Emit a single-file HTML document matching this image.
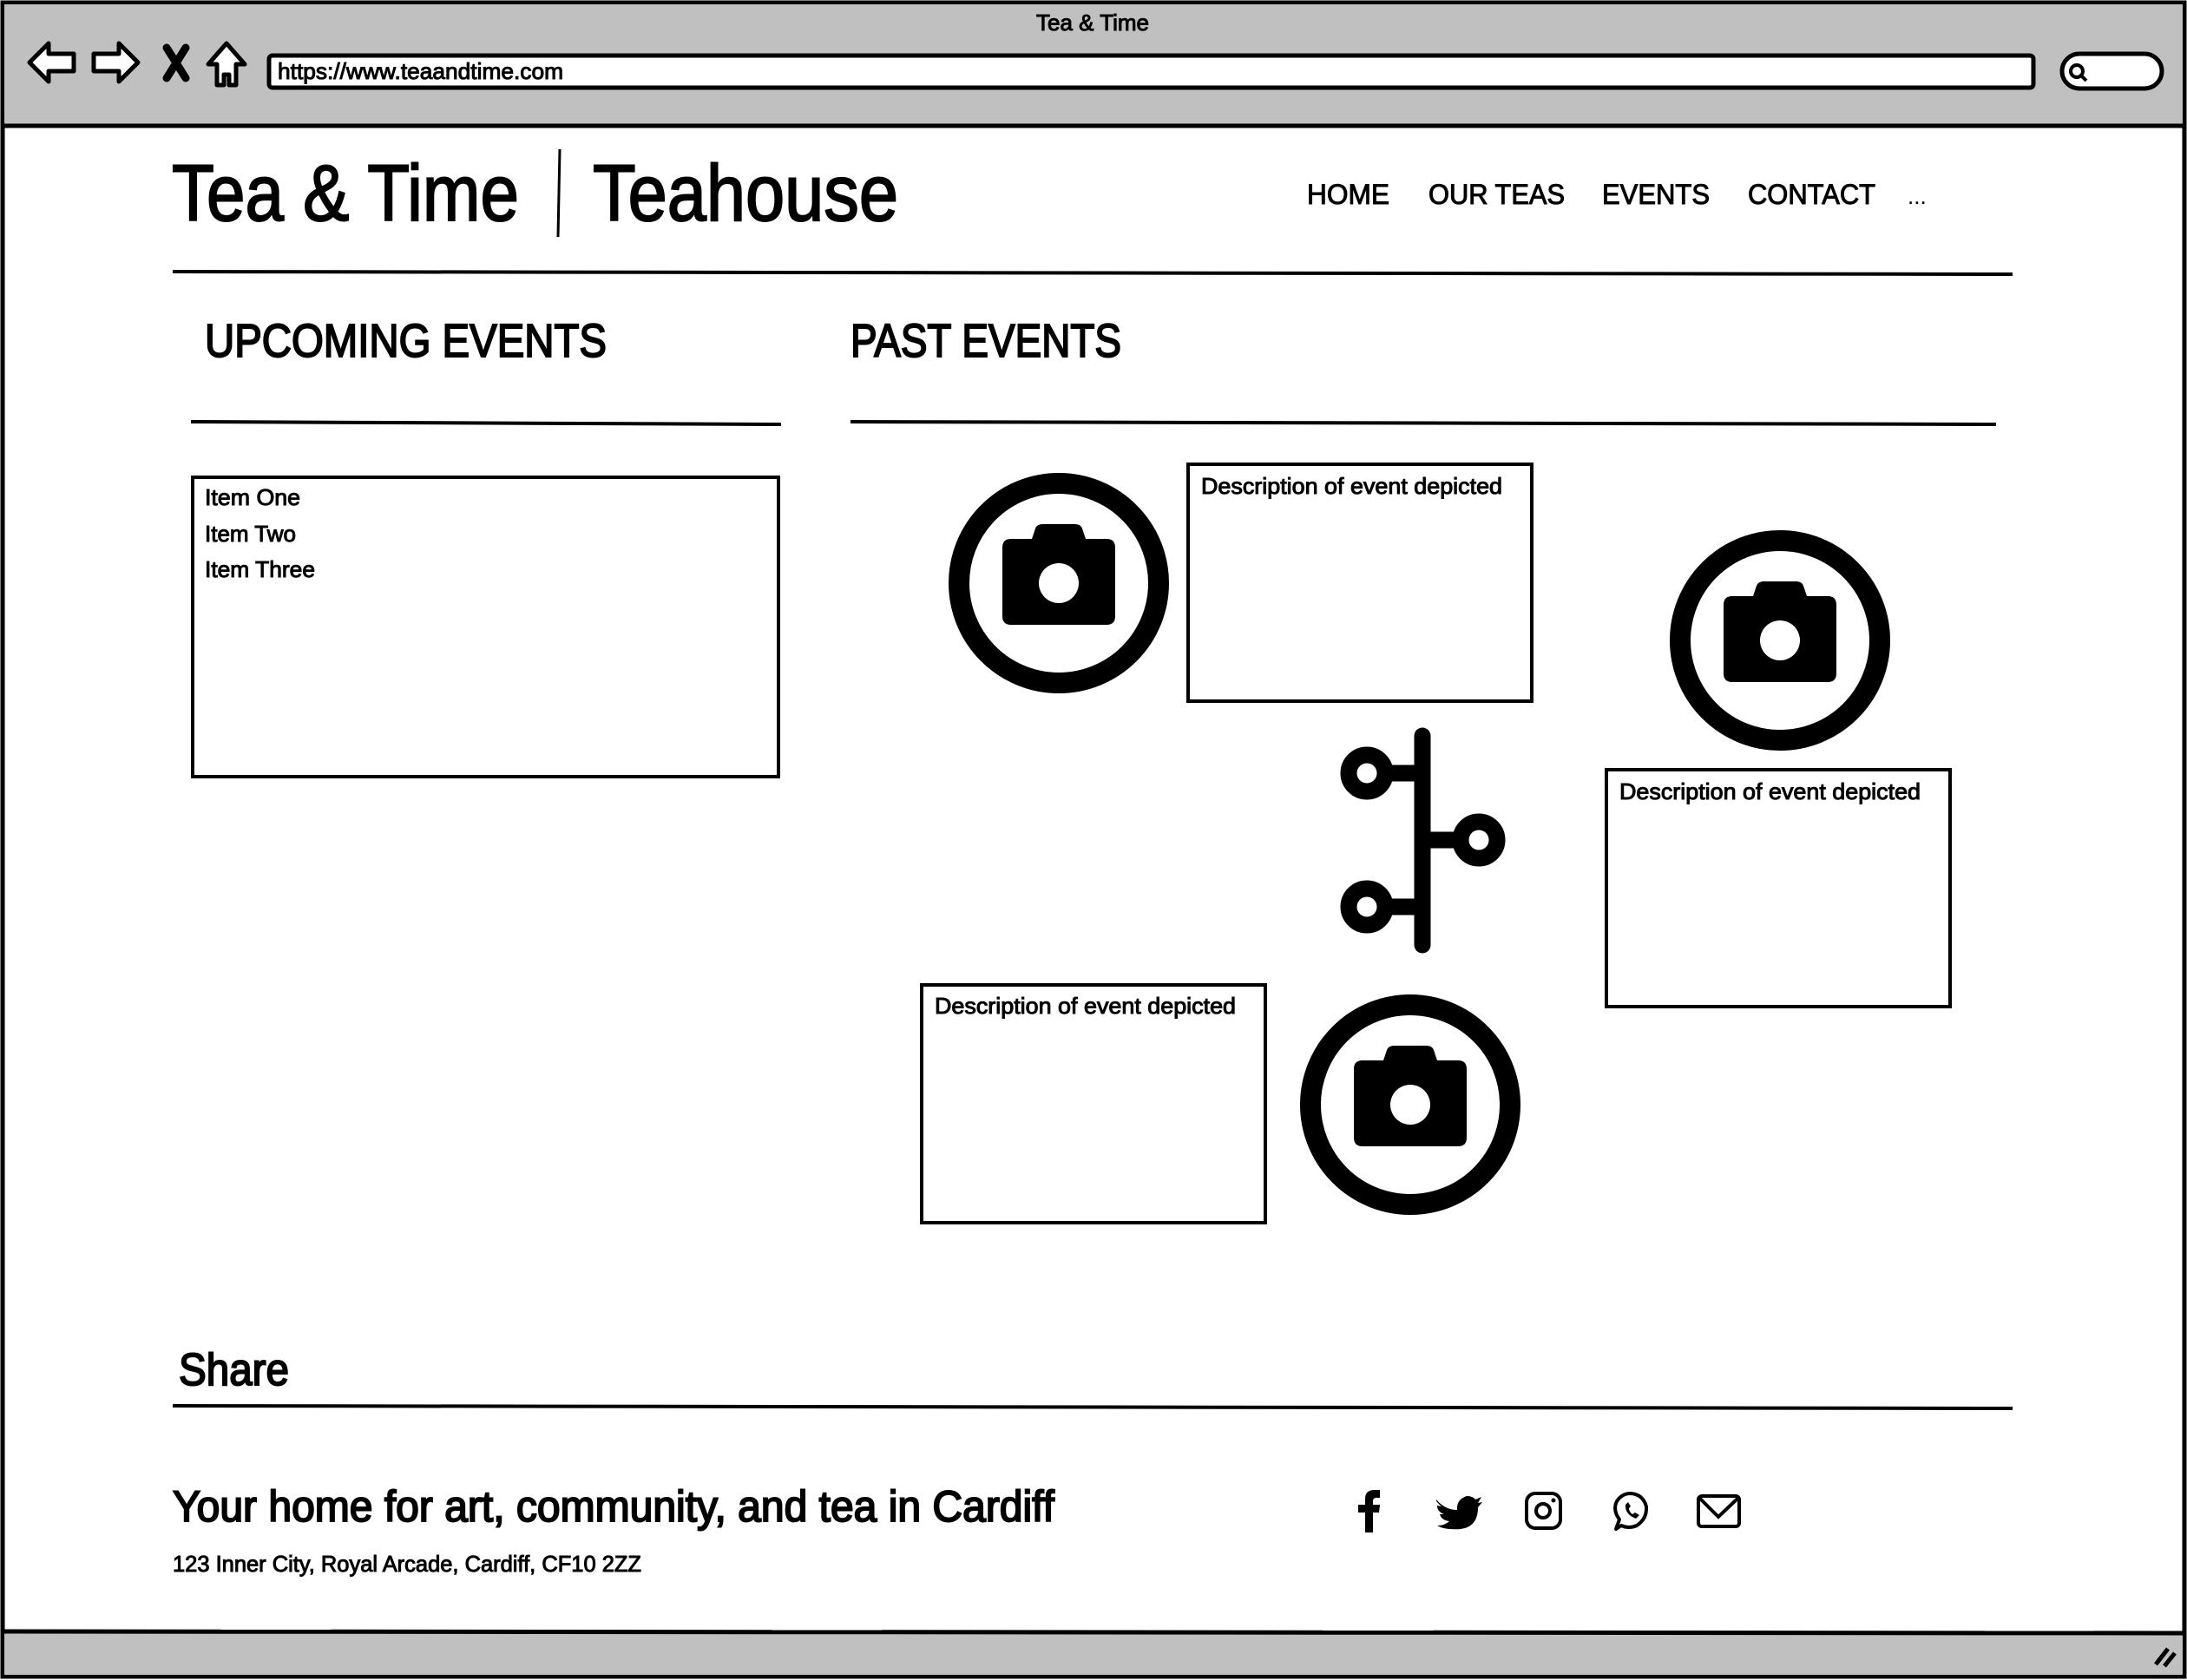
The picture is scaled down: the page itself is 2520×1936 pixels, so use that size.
<!DOCTYPE html>
<html><head><meta charset="utf-8"><style>
html,body{margin:0;padding:0;background:#fff;}
svg{display:block}
text{font-family:"Liberation Sans",sans-serif;fill:#000}
.b{stroke:#000;stroke-width:2}
.m{stroke:#000;stroke-width:1}
</style></head><body>
<svg width="2520" height="1936" viewBox="0 0 2520 1936" xmlns="http://www.w3.org/2000/svg">
<!-- chrome -->
<rect x="3" y="3" width="2514" height="1929" fill="#fff" stroke="#000" stroke-width="5"/>
<rect x="5" y="5" width="2510" height="140" fill="#c0c0c0"/>
<line x1="3" y1="145" x2="2517" y2="145" stroke="#000" stroke-width="5"/>
<text class="m" x="1194" y="35" font-size="26" textLength="130" lengthAdjust="spacingAndGlyphs">Tea &amp; Time</text>
<!-- nav icons -->
<path d="M34 72 L56 50 L56 62 L85 62 L85 82 L56 82 L56 94 Z" fill="#fff" stroke="#000" stroke-width="5" stroke-linejoin="round"/>
<path d="M159 72 L137 50 L137 62 L108 62 L108 82 L137 82 L137 94 Z" fill="#fff" stroke="#000" stroke-width="5" stroke-linejoin="round"/>
<path d="M192 55 L214 90 M214 55 L192 90" stroke="#000" stroke-width="9" stroke-linecap="round"/>
<path d="M261 50 L282 74 L272 74 L272 98 L264 98 L264 86 L258 86 L258 98 L250 98 L250 74 L240 74 Z" fill="#fff" stroke="#000" stroke-width="5" stroke-linejoin="round"/>
<rect x="310" y="64" width="2033" height="37" rx="4" fill="#fff" stroke="#000" stroke-width="5"/>
<text class="m" x="320" y="91" font-size="26" textLength="329" lengthAdjust="spacingAndGlyphs">https://www.teaandtime.com</text>
<rect x="2376" y="62" width="115" height="40" rx="20" fill="#fff" stroke="#000" stroke-width="5"/>
<circle cx="2393" cy="82" r="7" fill="none" stroke="#000" stroke-width="4"/>
<line x1="2398" y1="87" x2="2404" y2="93" stroke="#000" stroke-width="4"/>
<!-- bottom bar -->
<rect x="5" y="1880" width="2510" height="50" fill="#c0c0c0"/>
<line x1="3" y1="1880" x2="2517" y2="1882" stroke="#000" stroke-width="5"/>
<line x1="2484" y1="1918" x2="2498" y2="1900" stroke="#000" stroke-width="5"/>
<line x1="2494" y1="1920" x2="2506" y2="1905" stroke="#000" stroke-width="5"/>
<!-- header -->
<text class="b" x="198" y="254" font-size="92" textLength="400" lengthAdjust="spacingAndGlyphs">Tea &amp; Time</text>
<line x1="645" y1="172" x2="643" y2="273" stroke="#000" stroke-width="3"/>
<text class="b" x="683" y="254" font-size="92" textLength="352" lengthAdjust="spacingAndGlyphs">Teahouse</text>
<text class="m" x="1506" y="235" font-size="32" textLength="95" lengthAdjust="spacingAndGlyphs">HOME</text>
<text class="m" x="1646" y="235" font-size="32" textLength="157" lengthAdjust="spacingAndGlyphs">OUR TEAS</text>
<text class="m" x="1846" y="235" font-size="32" textLength="124" lengthAdjust="spacingAndGlyphs">EVENTS</text>
<text class="m" x="2014" y="235" font-size="32" textLength="147" lengthAdjust="spacingAndGlyphs">CONTACT</text>
<text x="2198" y="235" font-size="26">...</text>
<line x1="199" y1="313" x2="2319" y2="316" stroke="#000" stroke-width="4"/>
<!-- section heads -->
<text class="b" x="236" y="411" font-size="54" textLength="463" lengthAdjust="spacingAndGlyphs">UPCOMING EVENTS</text>
<text class="b" x="980" y="411" font-size="54" textLength="312" lengthAdjust="spacingAndGlyphs">PAST EVENTS</text>
<line x1="220" y1="486" x2="900" y2="489" stroke="#000" stroke-width="4"/>
<line x1="980" y1="486" x2="2300" y2="489" stroke="#000" stroke-width="4"/>
<!-- list -->
<rect x="222" y="550" width="675" height="345" fill="#fff" stroke="#000" stroke-width="4"/>
<text class="m" x="236" y="582" font-size="26" textLength="110" lengthAdjust="spacingAndGlyphs">Item One</text>
<text class="m" x="236" y="624" font-size="26" textLength="105" lengthAdjust="spacingAndGlyphs">Item Two</text>
<text class="m" x="236" y="665" font-size="26" textLength="127" lengthAdjust="spacingAndGlyphs">Item Three</text>
<!-- cameras -->
<g id="cam1">
<circle cx="1220" cy="672" r="115" fill="none" stroke="#000" stroke-width="24"/>
<path d="M1165 621 L1189 621 L1193 609 Q1195 604 1201 604 L1239 604 Q1245 604 1247 609 L1251 621 L1275 621 Q1285 621 1285 631 L1285 710 Q1285 720 1275 720 L1165 720 Q1155 720 1155 710 L1155 631 Q1155 621 1165 621 Z" fill="#000"/>
<circle cx="1220" cy="672" r="23" fill="#fff"/>
</g>
<use href="#cam1" transform="translate(831,66)"/>
<use href="#cam1" transform="translate(405,601)"/>
<!-- desc boxes -->
<rect x="1369" y="535" width="396" height="273" fill="#fff" stroke="#000" stroke-width="4"/>
<text class="m" x="1384" y="569" font-size="26" textLength="347" lengthAdjust="spacingAndGlyphs">Description of event depicted</text>
<rect x="1851" y="887" width="396" height="273" fill="#fff" stroke="#000" stroke-width="4"/>
<text class="m" x="1866" y="921" font-size="26" textLength="347" lengthAdjust="spacingAndGlyphs">Description of event depicted</text>
<rect x="1062" y="1135" width="396" height="274" fill="#fff" stroke="#000" stroke-width="4"/>
<text class="m" x="1077" y="1168" font-size="26" textLength="347" lengthAdjust="spacingAndGlyphs">Description of event depicted</text>
<!-- timeline -->
<line x1="1639" y1="848" x2="1639" y2="1089" stroke="#000" stroke-width="19" stroke-linecap="round"/>
<line x1="1590" y1="891" x2="1639" y2="891" stroke="#000" stroke-width="19"/>
<line x1="1639" y1="968" x2="1690" y2="968" stroke="#000" stroke-width="19"/>
<line x1="1590" y1="1045" x2="1639" y2="1045" stroke="#000" stroke-width="19"/>
<circle cx="1575" cy="891" r="21" fill="#fff" stroke="#000" stroke-width="19"/>
<circle cx="1704" cy="968" r="21" fill="#fff" stroke="#000" stroke-width="19"/>
<circle cx="1575" cy="1045" r="21" fill="#fff" stroke="#000" stroke-width="19"/>
<!-- share -->
<text class="b" x="206" y="1596" font-size="52" textLength="127" lengthAdjust="spacingAndGlyphs">Share</text>
<line x1="199" y1="1620" x2="2319" y2="1623" stroke="#000" stroke-width="4"/>
<text class="b" x="199" y="1753" font-size="50" textLength="1016" lengthAdjust="spacingAndGlyphs">Your home for art, community, and tea in Cardiff</text>
<text class="m" x="199" y="1811" font-size="26" textLength="540" lengthAdjust="spacingAndGlyphs">123 Inner City, Royal Arcade, Cardiff, CF10 2ZZ</text>
<!-- social icons -->
<path d="M1573 1766 L1573 1743 L1565 1743 L1565 1734 L1573 1734 L1573 1727 Q1573 1717 1584 1717 L1590 1717 L1590 1726 L1586 1726 Q1582 1726 1582 1730 L1582 1734 L1590 1734 L1589 1743 L1582 1743 L1582 1766 Z" fill="#000"/>
<path d="M1655 1728 Q1665 1740 1679 1740 Q1678 1728 1690 1724 Q1697 1724 1700 1728 L1707 1725 L1703 1732 L1708 1731 L1703 1737 Q1703 1765 1672 1762 Q1663 1762 1656 1758 Q1665 1758 1670 1753 Q1661 1752 1659 1745 L1664 1745 Q1656 1742 1656 1735 L1661 1736 Q1654 1730 1655 1728 Z" fill="#000"/>
<rect x="1759" y="1721" width="39" height="40" rx="10" fill="none" stroke="#000" stroke-width="4"/>
<circle cx="1778" cy="1741" r="8" fill="none" stroke="#000" stroke-width="4"/>
<circle cx="1790" cy="1729" r="2.5" fill="#000"/>
<path d="M1862 1762 L1866 1751 Q1858 1740 1863 1730 Q1869 1721 1879 1721 Q1893 1722 1897 1736 Q1898 1750 1886 1758 Q1877 1762 1868 1758 Z" fill="none" stroke="#000" stroke-width="4" stroke-linejoin="round"/>
<path d="M1873 1734 Q1872 1745 1885 1750 L1889 1746 L1884 1743 L1881 1745 Q1877 1742 1877 1738 L1879 1736 L1876 1731 Z" fill="#000"/>
<rect x="1957" y="1724" width="47" height="35" rx="4" fill="none" stroke="#000" stroke-width="4"/>
<path d="M1959 1727 L1980 1748 L2002 1727" fill="none" stroke="#000" stroke-width="4"/>
</svg>
</body></html>
